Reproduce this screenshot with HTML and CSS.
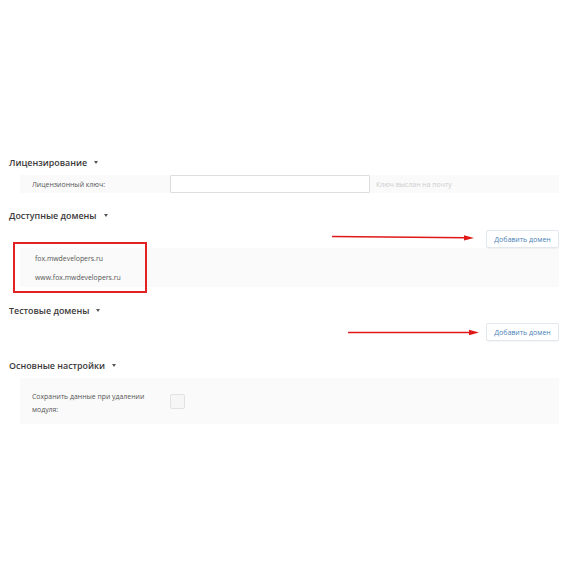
FILE: index.html
```html
<!DOCTYPE html>
<html lang="ru">
<head>
<meta charset="utf-8">
<title>Настройки модуля</title>
<link rel="stylesheet" href="styles.css">
</head>
<body>
<div class="page">
  <div class="sec-head sec-first">Лицензирование <span class="caret"></span></div>
  <div class="row row-license">
    <div class="label">Лицензионный ключ:</div>
    <input class="text-input" type="text">
    <div class="hint">Ключ выслан на почту</div>
  </div>

  <div class="sec-head sec-domains">Доступные домены <span class="caret"></span></div>
  <div class="btn-row btn-row-1"><button class="btn">Добавить домен</button></div>
  <div class="domain-list">
    <div class="domain">fox.mwdevelopers.ru</div>
    <div class="domain">www.fox.mwdevelopers.ru</div>
  </div>

  <div class="sec-head sec-test">Тестовые домены <span class="caret"></span></div>
  <div class="btn-row btn-row-2"><button class="btn">Добавить домен</button></div>

  <div class="sec-head sec-main">Основные настройки <span class="caret"></span></div>
  <div class="row row-settings">
    <div class="label label-wrap">Сохранить данные при удалении модуля:</div>
    <span class="checkbox"></span>
  </div>

  <div class="red-box"></div>
  <svg class="arrows" width="570" height="570" viewBox="0 0 570 570">
    <line x1="332" y1="236.5" x2="466" y2="237.8" stroke="#e01818" stroke-width="1.6"/>
    <polygon points="474,238 464,235.3 464,240.5" fill="#e01818"/>
    <line x1="348" y1="332.5" x2="471" y2="332.5" stroke="#e01818" stroke-width="1.6"/>
    <polygon points="479,332.5 469,329.8 469,335.2" fill="#e01818"/>
  </svg>
</div>
</body>
</html>
```

FILE: styles.css
```css
html, body {
  margin: 0;
  padding: 0;
  background: #ffffff;
}

body {
  font-family: "Open Sans", "Noto Sans", "Liberation Sans", sans-serif;
  color: #333333;
}

.page {
  position: relative;
  width: 570px;
  height: 570px;
  box-sizing: border-box;
  padding: 153px 11px 0 9px;
}

.sec-head {
  height: 18px;
  display: flex;
  align-items: center;
  font-size: 8.9px;
  font-weight: 600;
  color: #3a3a3a;
}

.caret {
  display: inline-block;
  width: 0;
  height: 0;
  margin-left: 7px;
  border-left: 2.5px solid transparent;
  border-right: 2.5px solid transparent;
  border-top: 3px solid #555555;
}

.sec-domains { margin-top: 13px; }
.sec-test { margin-top: 14px; }
.sec-main { margin-top: 15px; }

.row {
  margin-left: 11px;
  background: #fafafa;
  display: flex;
  align-items: center;
}

.row-license {
  margin-top: 4px;
  height: 18px;
}

.label {
  width: 150px;
  box-sizing: border-box;
  padding: 0 12px;
  font-size: 6.9px;
  color: #555555;
  flex-shrink: 0;
}

.text-input {
  width: 200px;
  height: 18px;
  box-sizing: border-box;
  border: 1px solid #dedede;
  border-radius: 1px;
  background: #ffffff;
  margin: 0;
  padding: 0 4px;
  outline: none;
}

.hint {
  margin-left: 6px;
  font-size: 6.9px;
  color: #cccccc;
}

.btn-row {
  display: flex;
  justify-content: flex-end;
}

.btn-row-1 { margin-top: 6px; }
.btn-row-2 { margin-top: 4px; }

.btn {
  width: 73px;
  height: 18px;
  padding: 0;
  margin: 0;
  border: 1px solid #e3e8ee;
  border-radius: 2px;
  background: #ffffff;
  box-shadow: 0 1px 1px rgba(0, 0, 0, 0.04);
  font-family: "Open Sans", "Noto Sans", "Liberation Sans", sans-serif;
  font-size: 7px;
  color: #4a7fb5;
}

.domain-list {
  margin-left: 11px;
  height: 39px;
  background: #fafafa;
  box-sizing: border-box;
  padding: 1px 0 0 15px;
}

.domain {
  height: 19px;
  line-height: 19px;
  font-size: 6.9px;
  color: #555555;
}

.row-settings {
  margin-top: 4px;
  height: 46px;
}

.label-wrap {
  line-height: 13px;
  padding-top: 3px;
}

.checkbox {
  width: 15px;
  height: 15px;
  box-sizing: border-box;
  border: 1px solid #e2e2e2;
  border-radius: 2px;
  background: #f6f6f6;
}

.red-box {
  position: absolute;
  left: 13px;
  top: 242px;
  width: 134px;
  height: 51px;
  box-sizing: border-box;
  border: 2px solid #e02222;
}

.arrows {
  position: absolute;
  left: 0;
  top: 0;
  pointer-events: none;
}
```
